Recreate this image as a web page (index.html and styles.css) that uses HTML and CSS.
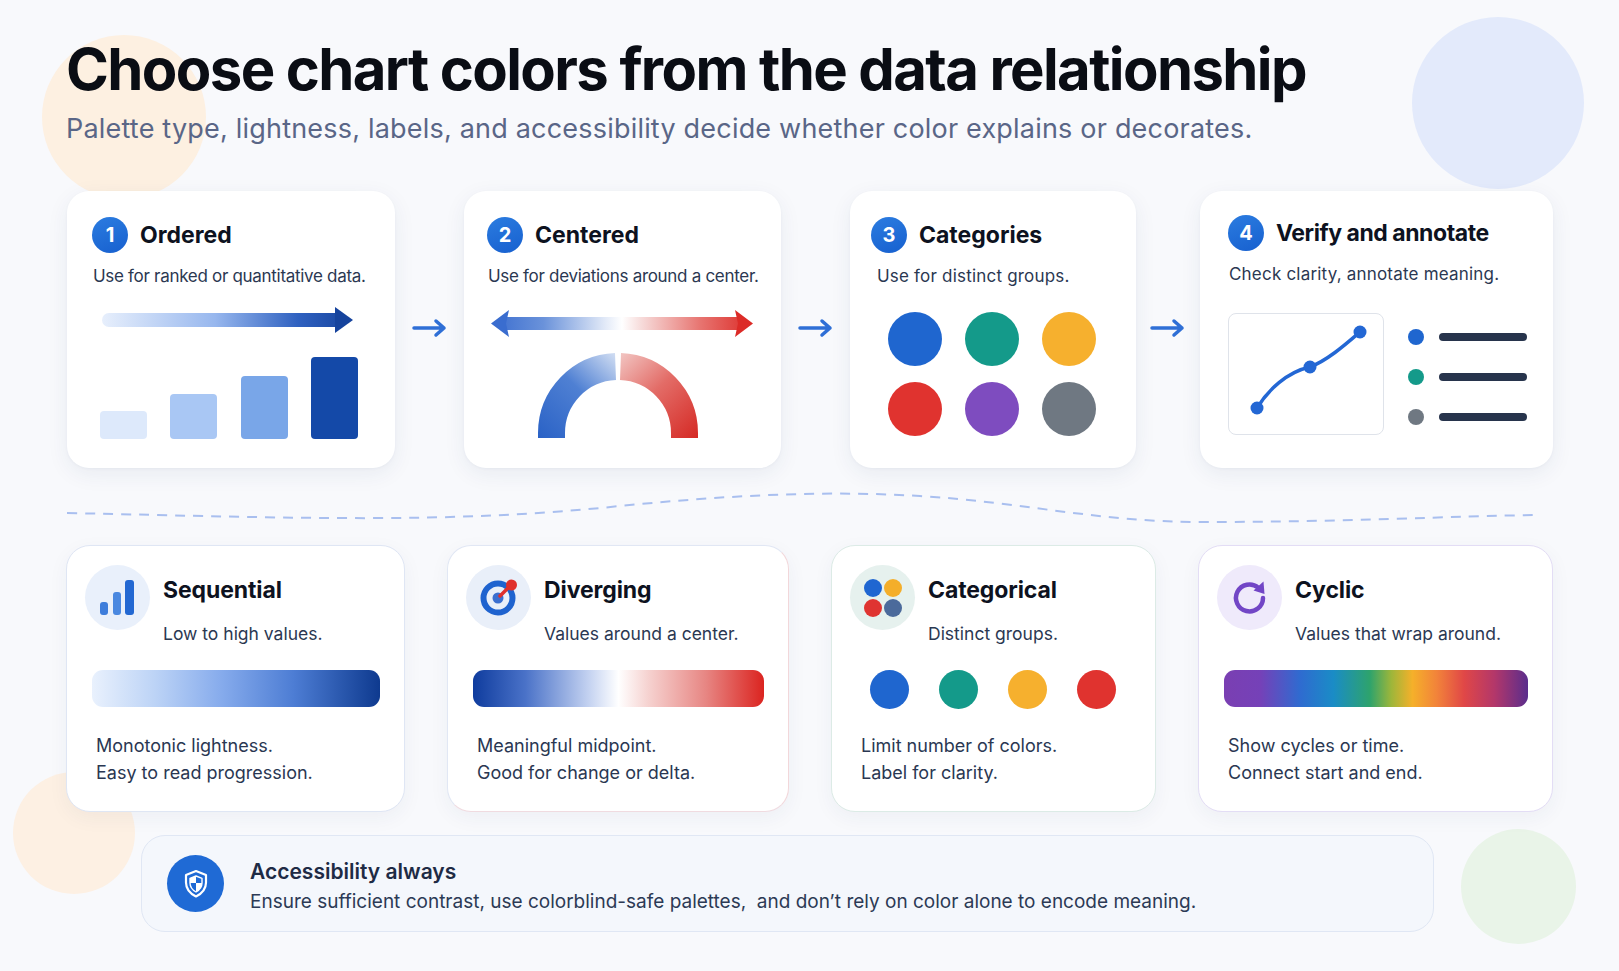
FILE: index.html
```html
<!DOCTYPE html>
<html lang="en">
<head>
<meta charset="utf-8">
<title>Choose chart colors from the data relationship</title>
<link rel="stylesheet" href="styles.css">
</head>
<body>
<div class="page">
  <div class="blob blob-peach-top"></div>
  <div class="blob blob-blue-top"></div>
  <div class="blob blob-peach-bottom"></div>
  <div class="blob blob-green-bottom"></div>

  <header class="header">
    <h1 class="title">Choose chart colors from the data relationship</h1>
    <p class="subtitle">Palette type, lightness, labels, and accessibility decide whether color explains or decorates.</p>
  </header>

  <section class="steps">
    <article class="step step-1">
      <div class="step-head"><span class="badge">1</span><h2 class="step-title">Ordered</h2></div>
      <p class="step-text">Use for ranked or quantitative data.</p>
      <svg class="step-visual" width="276" height="145" viewBox="0 0 276 145">
        <defs>
          <linearGradient id="ordArrow" x1="10" y1="0" x2="261" y2="0" gradientUnits="userSpaceOnUse">
            <stop offset="0" stop-color="#e7effc"/>
            <stop offset="0.45" stop-color="#97b7ee"/>
            <stop offset="0.78" stop-color="#2f61c0"/>
            <stop offset="1" stop-color="#15439d"/>
          </linearGradient>
        </defs>
        <rect x="10" y="13" width="240" height="14" rx="7" fill="url(#ordArrow)"/>
        <polygon points="243,7 261,20 243,33" fill="#15439d"/>
        <rect x="8" y="111" width="47" height="28" rx="4" fill="#dde9fb"/>
        <rect x="78" y="94" width="47" height="45" rx="4" fill="#a9c7f4"/>
        <rect x="149" y="76" width="47" height="63" rx="4" fill="#79a6e8"/>
        <rect x="219" y="57" width="47" height="82" rx="4" fill="#1449a8"/>
      </svg>
    </article>

    <div class="flow-arrow"><svg width="36" height="20" viewBox="0 0 36 20"><path d="M2 10 H32 M24 3 L32 10 L24 17" fill="none" stroke="#2f6fd6" stroke-width="3.5" stroke-linecap="round" stroke-linejoin="round"/></svg></div>

    <article class="step step-2">
      <div class="step-head"><span class="badge">2</span><h2 class="step-title">Centered</h2></div>
      <p class="step-text">Use for deviations around a center.</p>
      <svg class="step-visual" width="270" height="145" viewBox="0 0 270 145">
        <defs>
          <linearGradient id="divArrow" x1="4" y1="0" x2="266" y2="0" gradientUnits="userSpaceOnUse">
            <stop offset="0" stop-color="#3a6dcf"/>
            <stop offset="0.2" stop-color="#6a92da"/>
            <stop offset="0.44" stop-color="#e4ebf8"/>
            <stop offset="0.5" stop-color="#ffffff"/>
            <stop offset="0.57" stop-color="#f7dddc"/>
            <stop offset="0.8" stop-color="#e77470"/>
            <stop offset="1" stop-color="#dc2b27"/>
          </linearGradient>
          <linearGradient id="gaugeLeft" x1="52" y1="138" x2="131" y2="55" gradientUnits="userSpaceOnUse">
            <stop offset="0" stop-color="#2a62c6"/>
            <stop offset="0.55" stop-color="#4f80d3"/>
            <stop offset="1" stop-color="#d3dff3"/>
          </linearGradient>
          <linearGradient id="gaugeRight" x1="131" y1="55" x2="210" y2="138" gradientUnits="userSpaceOnUse">
            <stop offset="0" stop-color="#f2c6c3"/>
            <stop offset="0.45" stop-color="#e36c67"/>
            <stop offset="1" stop-color="#d52a25"/>
          </linearGradient>
        </defs>
        <rect x="16" y="17" width="238" height="13" fill="url(#divArrow)"/>
        <path d="M4 23.5 L22 10 L19 23.5 L22 37 Z" fill="#3a6dcf"/>
        <path d="M266 23.5 L248 10 L251 23.5 L248 37 Z" fill="#dc2b27"/>
        <path d="M64.5 138 L64.5 133 A66.5 66.5 0 0 1 128.5 66.55" fill="none" stroke="url(#gaugeLeft)" stroke-width="27"/>
        <path d="M133.5 66.55 A66.5 66.5 0 0 1 197.5 133 L197.5 138" fill="none" stroke="url(#gaugeRight)" stroke-width="27"/>
      </svg>
    </article>

    <div class="flow-arrow"><svg width="36" height="20" viewBox="0 0 36 20"><path d="M2 10 H32 M24 3 L32 10 L24 17" fill="none" stroke="#2f6fd6" stroke-width="3.5" stroke-linecap="round" stroke-linejoin="round"/></svg></div>

    <article class="step step-3">
      <div class="step-head"><span class="badge">3</span><h2 class="step-title">Categories</h2></div>
      <p class="step-text">Use for distinct groups.</p>
      <div class="swatches">
        <span class="swatch c-blue"></span>
        <span class="swatch c-teal"></span>
        <span class="swatch c-yellow"></span>
        <span class="swatch c-red"></span>
        <span class="swatch c-purple"></span>
        <span class="swatch c-gray"></span>
      </div>
    </article>

    <div class="flow-arrow narrow"><svg width="36" height="20" viewBox="0 0 36 20"><path d="M2 10 H32 M24 3 L32 10 L24 17" fill="none" stroke="#2f6fd6" stroke-width="3.5" stroke-linecap="round" stroke-linejoin="round"/></svg></div>

    <article class="step step-4">
      <div class="step-head"><span class="badge">4</span><h2 class="step-title">Verify and annotate</h2></div>
      <p class="step-text">Check clarity, annotate meaning.</p>
      <div class="verify">
        <div class="mini-chart">
          <svg width="153" height="119" viewBox="0 0 153 119">
            <path d="M28 94 C39 76 58 58 81 53 C99 46 117 30 131 18" fill="none" stroke="#2367d4" stroke-width="3.5" stroke-linecap="round"/>
            <circle cx="28" cy="94" r="6.5" fill="#2367d4"/>
            <circle cx="81" cy="53" r="6.5" fill="#2367d4"/>
            <circle cx="131" cy="18" r="6.5" fill="#2367d4"/>
          </svg>
        </div>
        <ul class="legend">
          <li><span class="legend-dot c-blue"></span><span class="legend-line"></span></li>
          <li><span class="legend-dot c-teal"></span><span class="legend-line"></span></li>
          <li><span class="legend-dot c-gray"></span><span class="legend-line"></span></li>
        </ul>
      </div>
    </article>
  </section>

  <svg class="wave" width="1619" height="50" viewBox="0 0 1619 50">
    <path d="M67 35 C300 40 450 46 620 28 C720 18 820 12 920 18 C1020 24 1100 44 1200 44 C1350 44 1450 38 1539 37" fill="none" stroke="#a9bfef" stroke-width="2" stroke-dasharray="10 8"/>
  </svg>

  <section class="palettes">
    <article class="palette pal-seq">
      <div class="pal-head">
        <span class="pal-icon icon-seq">
          <svg width="65" height="65" viewBox="0 0 65 65">
            <rect x="15" y="37" width="8" height="13" rx="3" fill="#3d7ddb"/>
            <rect x="28" y="27" width="8" height="23" rx="3" fill="#4a88e0"/>
            <rect x="40" y="15" width="9" height="35" rx="3" fill="#2368d2"/>
          </svg>
        </span>
        <div class="pal-titles">
          <h3 class="pal-title">Sequential</h3>
          <p class="pal-sub">Low to high values.</p>
        </div>
      </div>
      <div class="pal-bar bar-seq"></div>
      <p class="pal-notes">Monotonic lightness.<br>Easy to read progression.</p>
    </article>

    <article class="palette pal-div">
      <div class="pal-head">
        <span class="pal-icon icon-div">
          <svg width="65" height="65" viewBox="0 0 65 65">
            <circle cx="32" cy="33" r="14.5" fill="none" stroke="#1f63cf" stroke-width="6"/>
            <circle cx="32" cy="33" r="5.5" fill="#3b6fd0"/>
            <path d="M34 31 L44 21" stroke="#e0302c" stroke-width="3.5" stroke-linecap="round"/>
            <circle cx="45.5" cy="20" r="5.5" fill="#e0302c"/>
          </svg>
        </span>
        <div class="pal-titles">
          <h3 class="pal-title">Diverging</h3>
          <p class="pal-sub">Values around a center.</p>
        </div>
      </div>
      <div class="pal-bar bar-div"></div>
      <p class="pal-notes">Meaningful midpoint.<br>Good for change or delta.</p>
    </article>

    <article class="palette pal-cat">
      <div class="pal-head">
        <span class="pal-icon icon-cat">
          <svg width="65" height="65" viewBox="0 0 65 65">
            <circle cx="23" cy="23" r="9" fill="#1f66d1"/>
            <circle cx="43" cy="23" r="9" fill="#f4ae2a"/>
            <circle cx="23" cy="43" r="9" fill="#df3431"/>
            <circle cx="43" cy="43" r="9" fill="#4b6a9b"/>
          </svg>
        </span>
        <div class="pal-titles">
          <h3 class="pal-title">Categorical</h3>
          <p class="pal-sub">Distinct groups.</p>
        </div>
      </div>
      <div class="cat-dots">
        <span class="cat-dot c-blue"></span>
        <span class="cat-dot c-teal"></span>
        <span class="cat-dot c-yellow"></span>
        <span class="cat-dot c-red"></span>
      </div>
      <p class="pal-notes">Limit number of colors.<br>Label for clarity.</p>
    </article>

    <article class="palette pal-cyc">
      <div class="pal-head">
        <span class="pal-icon icon-cyc">
          <svg width="65" height="65" viewBox="0 0 65 65">
            <path d="M46 33 A13.5 13.5 0 1 1 41.2 22.6" fill="none" stroke="#7246c6" stroke-width="4.5" stroke-linecap="round"/>
            <polygon points="36.5,25.5 46.5,16.5 47.5,29" fill="#7246c6"/>
          </svg>
        </span>
        <div class="pal-titles">
          <h3 class="pal-title">Cyclic</h3>
          <p class="pal-sub">Values that wrap around.</p>
        </div>
      </div>
      <div class="pal-bar bar-cyc"></div>
      <p class="pal-notes">Show cycles or time.<br>Connect start and end.</p>
    </article>
  </section>

  <section class="access">
    <span class="access-icon">
      <svg width="26" height="30" viewBox="0 0 26 30">
        <path d="M13 2 L23 6 V13.5 C23 20 19 24.5 13 27.5 C7 24.5 3 20 3 13.5 V6 Z" fill="none" stroke="#fff" stroke-width="2.2" stroke-linejoin="round"/>
        <path d="M13 7 L19 9.3 V14 C19 18 16.8 20.8 13 23 C9.2 20.8 7 18 7 14 V9.3 Z" fill="none" stroke="#fff" stroke-width="1.4" stroke-linejoin="round"/>
        <path d="M13 7 L7 9.3 V14 H13 Z" fill="#fff"/>
        <path d="M13 14 H19 C19 18 16.8 20.8 13 23 Z" fill="#fff"/>
      </svg>
    </span>
    <div class="access-text">
      <h4 class="access-title">Accessibility always</h4>
      <p class="access-body">Ensure sufficient contrast, use colorblind-safe palettes,&nbsp; and don’t rely on color alone to encode meaning.</p>
    </div>
  </section>
</div>
</body>
</html>
```

FILE: styles.css
```css
* { box-sizing: border-box; }

html, body {
  margin: 0;
  padding: 0;
  background: #f8f9fc;
}

body {
  font-family: "Inter", "Noto Sans", "Liberation Sans", sans-serif;
  color: #0d1220;
}

.page {
  position: relative;
  width: 1619px;
  height: 971px;
  overflow: hidden;
  background: #f8f9fc;
}

.blob {
  position: absolute;
  border-radius: 50%;
  z-index: 0;
}
.blob-peach-top { left: 42px; top: 35px; width: 164px; height: 164px; background: #fdf0e1; }
.blob-blue-top { left: 1412px; top: 17px; width: 172px; height: 172px; background: #e3eafb; }
.blob-peach-bottom { left: 13px; top: 772px; width: 122px; height: 122px; background: #fdf0e3; }
.blob-green-bottom { left: 1461px; top: 829px; width: 115px; height: 115px; background: #e9f4e8; }

.header, .steps, .wave, .palettes, .access {
  position: relative;
  z-index: 1;
}

.header {
  padding: 40px 0 0 66px;
}

.title {
  margin: 0;
  font-size: 58px;
  line-height: 58px;
  font-weight: 700;
  letter-spacing: -1.6px;
  color: #0a0d14;
}

.subtitle {
  margin: 15px 0 0 0;
  font-size: 27px;
  line-height: 31px;
  font-weight: 400;
  letter-spacing: 0.2px;
  color: #5a6687;
}

/* ---------- steps row ---------- */
.steps {
  display: flex;
  margin: 47px 0 0 67px;
  height: 277px;
}

.step {
  background: #ffffff;
  border-radius: 22px;
  box-shadow: 0 6px 22px rgba(35, 55, 100, 0.07), 0 1px 3px rgba(35, 55, 100, 0.04);
  padding-top: 26px;
  display: flex;
  flex-direction: column;
}
.step-1 { width: 328px; padding-left: 25px; }
.step-2 { width: 317px; padding-left: 23px; }
.step-3 { width: 286px; padding-left: 21px; }
.step-4 { width: 353px; padding-left: 28px; padding-top: 24px; }

.flow-arrow {
  width: 69px;
  display: flex;
  align-items: center;
  justify-content: center;
  padding-bottom: 4px;
}
.flow-arrow.narrow { width: 64px; }

.step-head {
  display: flex;
  align-items: center;
  gap: 12px;
  height: 36px;
}

.badge {
  width: 36px;
  height: 36px;
  border-radius: 50%;
  background: linear-gradient(160deg, #2b7ce0, #1760cf);
  color: #fff;
  font-size: 20px;
  font-weight: 700;
  display: flex;
  align-items: center;
  justify-content: center;
  flex: none;
}

.step-title {
  margin: 0;
  font-size: 23px;
  font-weight: 700;
  letter-spacing: 0;
  color: #0d1220;
}
.step-4 .step-title { letter-spacing: -0.45px; }

.step-text {
  margin: 12px 0 0 1px;
  font-size: 17px;
  line-height: 22px;
  color: #2b3852;
}
.step-1 .step-text, .step-2 .step-text { letter-spacing: -0.3px; }
.step-3 .step-text { margin-left: 6px; letter-spacing: 0.2px; }
.step-4 .step-text { letter-spacing: 0.2px; }

.step-visual {
  display: block;
  margin-top: 13px;
}

.swatches {
  display: grid;
  grid-template-columns: repeat(3, 54px);
  column-gap: 23px;
  row-gap: 16px;
  margin: 25px 0 0 17px;
}
.swatch {
  width: 54px;
  height: 54px;
  border-radius: 50%;
}

.c-blue { background: #1f66cf; }
.c-teal { background: #149a8a; }
.c-yellow { background: #f6b02e; }
.c-red { background: #e0332f; }
.c-purple { background: #7e4cbf; }
.c-gray { background: #6f7882; }

.verify {
  display: flex;
  align-items: flex-start;
  margin-top: 28px;
}

.mini-chart {
  width: 156px;
  height: 122px;
  border: 1.5px solid #dfe3ea;
  border-radius: 8px;
  background: #fff;
  flex: none;
}
.mini-chart svg { display: block; }

.legend {
  list-style: none;
  margin: 16px 0 0 24px;
  padding: 0;
  display: flex;
  flex-direction: column;
  gap: 24px;
}
.legend li {
  display: flex;
  align-items: center;
  gap: 15px;
  height: 16px;
}
.legend-dot {
  width: 16px;
  height: 16px;
  border-radius: 50%;
  flex: none;
}
.legend-line {
  width: 88px;
  height: 8px;
  border-radius: 4px;
  background: #27344c;
}

/* ---------- wave ---------- */
.wave {
  display: block;
  margin-top: 10px;
}

/* ---------- palettes row ---------- */
.palettes {
  display: grid;
  grid-template-columns: 339px 342px 325px 355px;
  column-gap: 42px;
  margin: 17px 0 0 66px;
  height: 267px;
}

.palette {
  background: #ffffff;
  border: 1.5px solid #dfe6f4;
  border-radius: 24px;
  padding: 19px 24px 0 18px;
  box-shadow: 0 6px 20px rgba(35, 55, 100, 0.05);
}
.pal-div { border-color: #e1e7f4 #f2d7da #f0dbe0 #e1e7f4; }
.pal-cat { border-color: #dcebe6; }
.pal-cyc { border-color: #e3ddf5; }

.pal-head {
  display: flex;
  align-items: flex-start;
  gap: 13px;
}

.pal-icon {
  width: 65px;
  height: 65px;
  border-radius: 50%;
  flex: none;
}
.pal-icon svg { display: block; }
.icon-seq { background: #e9f0fb; }
.icon-div { background: #e9eff9; }
.icon-cat { background: #e6f1ee; }
.icon-cyc { background: #efeafb; }

.pal-titles {
  padding-top: 11px;
}

.pal-title {
  margin: 0;
  font-size: 23px;
  line-height: 28px;
  font-weight: 700;
  letter-spacing: -0.1px;
  color: #0d1220;
}

.pal-sub {
  margin: 19px 0 0 0;
  font-size: 17.5px;
  line-height: 22px;
  color: #2b3852;
}

.pal-bar {
  height: 37px;
  border-radius: 11px;
  margin: 25px 0 0 7px;
}
.bar-seq {
  background: linear-gradient(90deg, #e9f1fd 0%, #bcd3f6 22%, #86abec 45%, #4d7dd4 70%, #0e3a8f 100%);
}
.bar-div {
  background: linear-gradient(90deg, #0f3c9e 0%, #4a72c8 18%, #c5d3f1 40%, #ffffff 50%, #f6d3d1 60%, #e78683 80%, #db2420 100%);
}
.bar-cyc {
  background: linear-gradient(90deg, #7a3fb2 0%, #7541b8 12%, #2f6bd0 25%, #1a8cc6 36%, #2ea36c 48%, #9db63a 55%, #f5b02a 62%, #f2833a 70%, #e04747 79%, #b3376a 89%, #5a2d8c 100%);
}

.cat-dots {
  display: flex;
  gap: 30px;
  margin: 25px 0 0 20px;
  height: 37px;
}
.cat-dot {
  width: 39px;
  height: 39px;
  border-radius: 50%;
  flex: none;
}

.pal-notes {
  margin: 25px 0 0 11px;
  font-size: 18px;
  line-height: 27px;
  color: #2a3752;
}

/* ---------- accessibility ---------- */
.access {
  display: flex;
  align-items: center;
  gap: 26px;
  width: 1293px;
  height: 97px;
  margin: 23px 0 0 141px;
  padding: 0 25px;
  background: #f4f7fc;
  border: 1.5px solid #e0e7f4;
  border-radius: 24px;
}

.access-icon {
  width: 57px;
  height: 57px;
  border-radius: 50%;
  background: #1f6ad5;
  display: flex;
  align-items: center;
  justify-content: center;
  flex: none;
}
.access-icon svg { display: block; }

.access-text { padding-top: 6px; }

.access-title {
  margin: 0;
  font-size: 21px;
  line-height: 26px;
  font-weight: 600;
  color: #1e2b45;
}

.access-body {
  margin: 4px 0 0 0;
  font-size: 19px;
  line-height: 26px;
  color: #2c3a55;
}
```
